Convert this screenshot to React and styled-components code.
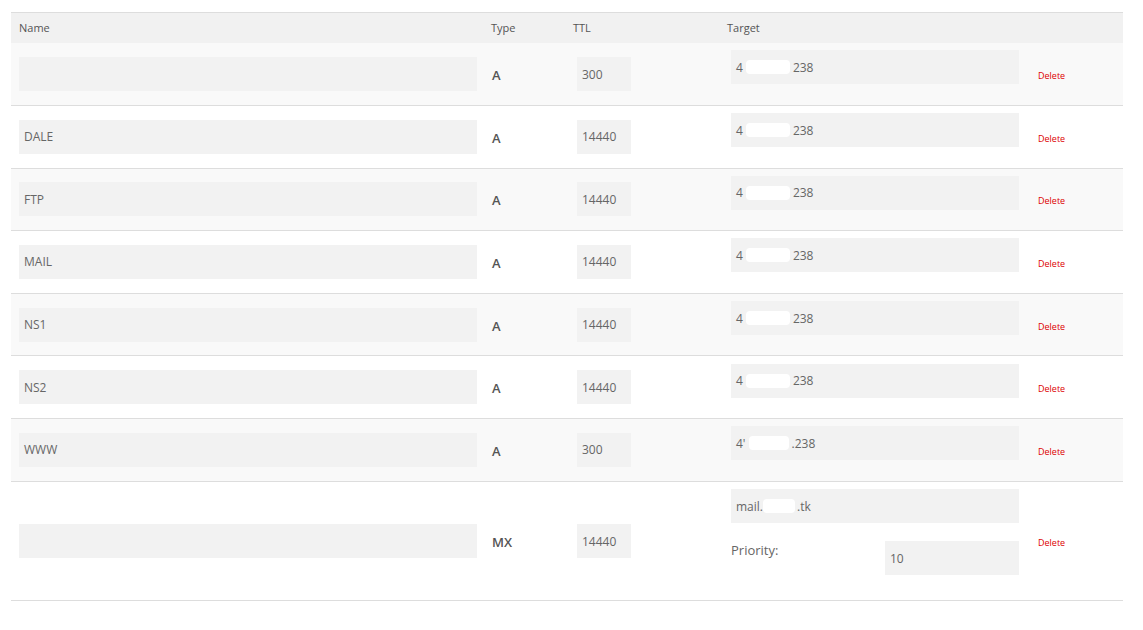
import React from "react";
import styled, { createGlobalStyle } from "styled-components";

const Global = createGlobalStyle`
  html, body { margin: 0; padding: 0; background: #fff; }
  body { font-family: "Open Sans", "Noto Sans", Arial, sans-serif; }
`;

const COLS = "472px 82px 154px 311px 93px";

const Page = styled.div`
  padding: 12px 0 0 11px;
`;

const Table = styled.div`
  width: 1112px;
  border-top: 1px solid #dddddd;
`;

const HeadRow = styled.div`
  box-sizing: border-box;
  display: grid;
  grid-template-columns: ${COLS};
  height: 30.2px;
  padding-bottom: 1.5px;
  align-items: center;
  background: #f1f1f1;
`;

const HeadCell = styled.div`
  padding-left: 8px;
  font-size: 11px;
  color: #555555;
`;

const Row = styled.div`
  box-sizing: border-box;
  display: grid;
  grid-template-columns: ${COLS};
  min-height: 62.67px;
  align-items: center;
  background: ${(p) => (p.$alt ? "#f9f9f9" : "#ffffff")};
  border-bottom: 1px solid #dddddd;
`;

const Cell = styled.div`
  display: flex;
  align-items: center;
  padding-left: ${(p) => p.$pl}px;
`;

const TargetCell = styled.div`
  align-self: start;
  display: flex;
  flex-direction: column;
  padding: 7.3px 0 ${(p) => p.$pb}px 12px;
`;

const Field = styled.div`
  box-sizing: border-box;
  display: flex;
  align-items: center;
  width: ${(p) => p.$w}px;
  height: 34px;
  padding-left: 5px;
  background: #f2f2f2;
  font-size: 12px;
  color: #666666;
  white-space: pre;
`;

const Redact = styled.span`
  display: inline-block;
  width: ${(p) => p.$w}px;
  height: 14px;
  margin: 0 ${(p) => p.$mr}px 0 ${(p) => p.$ml}px;
  border-radius: 4px;
  background: #ffffff;
`;

const TypeText = styled.span`
  font-size: 13px;
  font-weight: 600;
  color: #555555;
  padding-top: 2px;
`;

const DeleteLink = styled.a`
  font-size: 9px;
  color: #dd0000;
  text-decoration: none;
  cursor: pointer;
  padding-top: 3px;
`;

const PriorityRow = styled.div`
  display: flex;
  justify-content: space-between;
  align-items: flex-start;
  width: 288px;
  margin-top: 18px;
`;

const PriorityLabel = styled.span`
  font-size: 13px;
  line-height: 18px;
  color: #666666;
`;

const ip = (
  <>
    4<Redact $w={44} $ml={3} $mr={3} />238
  </>
);

const rows = [
  { name: "", type: "A", ttl: "300", target: ip },
  { name: "DALE", type: "A", ttl: "14440", target: ip },
  { name: "FTP", type: "A", ttl: "14440", target: ip },
  { name: "MAIL", type: "A", ttl: "14440", target: ip },
  { name: "NS1", type: "A", ttl: "14440", target: ip },
  { name: "NS2", type: "A", ttl: "14440", target: ip },
  {
    name: "WWW",
    type: "A",
    ttl: "300",
    target: (
      <>
        4'<Redact $w={40} $ml={3} $mr={3} />.238
      </>
    ),
  },
  {
    name: "",
    type: "MX",
    ttl: "14440",
    target: (
      <>
        mail.<Redact $w={32} $ml={0} $mr={2} />.tk
      </>
    ),
    priority: "10",
  },
];

export default function App() {
  return (
    <Page>
      <Global />
      <Table>
        <HeadRow>
          <HeadCell>Name</HeadCell>
          <HeadCell>Type</HeadCell>
          <HeadCell>TTL</HeadCell>
          <HeadCell>Target</HeadCell>
          <HeadCell />
        </HeadRow>
        {rows.map((r, i) => (
          <Row key={i} $alt={i % 2 === 0}>
            <Cell $pl={8}>
              <Field $w={458}>{r.name}</Field>
            </Cell>
            <Cell $pl={9}>
              <TypeText>{r.type}</TypeText>
            </Cell>
            <Cell $pl={12}>
              <Field $w={54}>{r.ttl}</Field>
            </Cell>
            <TargetCell $pb={r.priority ? 25.2 : 20}>
              <Field $w={288}>{r.target}</Field>
              {r.priority && (
                <PriorityRow>
                  <PriorityLabel>Priority:</PriorityLabel>
                  <Field $w={134}>{r.priority}</Field>
                </PriorityRow>
              )}
            </TargetCell>
            <Cell $pl={8}>
              <DeleteLink>Delete</DeleteLink>
            </Cell>
          </Row>
        ))}
      </Table>
    </Page>
  );
}
